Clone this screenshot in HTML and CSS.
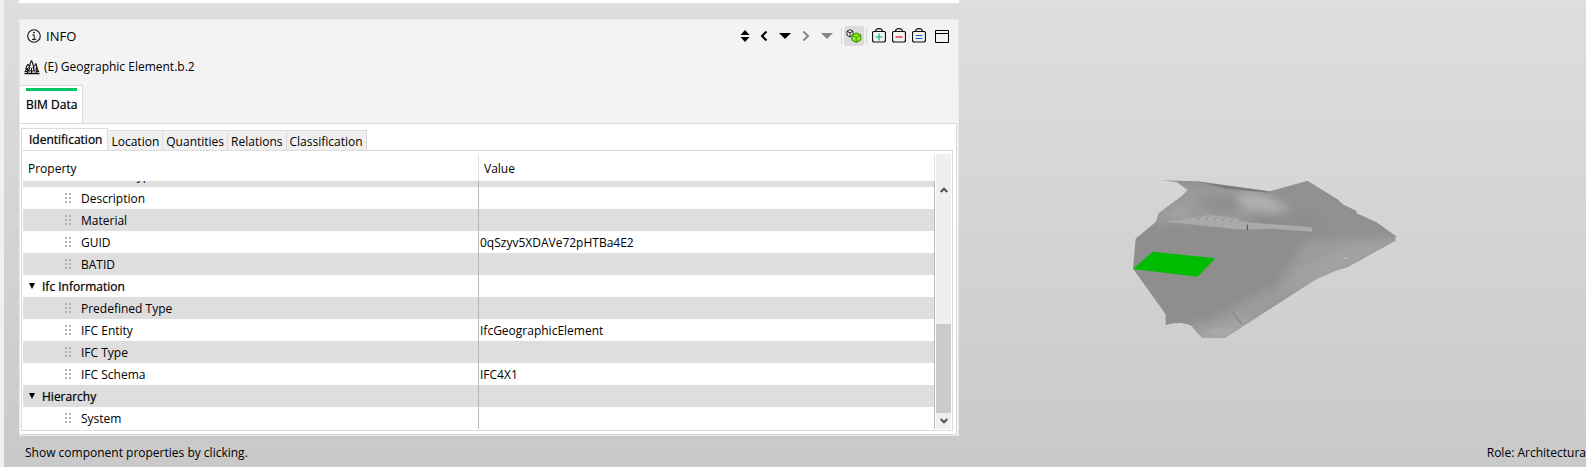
FILE: index.html
```html
<!DOCTYPE html>
<html lang="en">
<head>
<meta charset="utf-8">
<title>Info</title>
<link rel="stylesheet" href="styles.css">
</head>
<body>
<svg class="defs" aria-hidden="true">
  <defs>
    <symbol id="grip" viewBox="0 0 6 10"><path d="M0 0h2v2H0zM4 0h2v2H4zM0 4h2v2H0zM4 4h2v2H4zM0 8h2v2H0zM4 8h2v2H4z" fill="#b4b4b4"/></symbol>
    <symbol id="bag" viewBox="0 0 14 16"><path d="M3.500 3.500C3.500 2 5 .6 7 .6s3.500 1.400 3.500 2.900M2 3.500h10q1.500 0 1.500 1.500v7q0 2-2 2h-9q-2 0-2-2V5Q.5 3.500 2 3.500z" fill="none" stroke="#111" stroke-width="1.200"/></symbol>
  </defs>
</svg>
<div class="app">
  <main class="workspace">
    <div class="side">
      <section class="panel-above"></section>
      <section class="panel">
        <header class="panel-head">
          <svg class="icon-info" viewBox="0 0 14 14" aria-hidden="true"><circle cx="7" cy="7" r="6.300" fill="none" stroke="#111" stroke-width="1.100"/><path d="M6.200 3h1.600v1.300H6.200z"/><path d="M5.300 5.900h1.900v4.400M5 10.400h4.300" fill="none" stroke="#111"/></svg>
          <h1 class="panel-title">INFO</h1>
          <div class="toolbar">
            <button class="tool" aria-label="Sort"><svg width="10" height="12" viewBox="0 0 10 12"><path d="M5 0l4.500 5h-9zM5 12L.5 7h9z"/></svg></button>
            <button class="tool tool-narrow" aria-label="Back"><svg width="8" height="10" viewBox="0 0 8 10"><path d="M6.500.5L2 5l4.500 4.500" fill="none" stroke="#000" stroke-width="2"/></svg></button>
            <button class="tool tool-wide" aria-label="Back history"><svg width="12" height="6" viewBox="0 0 12 6"><path d="M0 0h12L6 6z"/></svg></button>
            <button class="tool tool-narrow" aria-label="Forward"><svg width="8" height="10" viewBox="0 0 8 10"><path d="M1.500.5L6 5 1.500 9.500" fill="none" stroke="#858585" stroke-width="2"/></svg></button>
            <button class="tool tool-wide" aria-label="Forward history"><svg width="12" height="6" viewBox="0 0 12 6"><path d="M0 0h12L6 6z" fill="#858585"/></svg></button>
            <span class="separator"></span>
            <button class="tool tool-on" aria-label="Show similar"><svg width="16" height="14" viewBox="0 0 16 14"><path d="M4 .7l3 1.600v4L4 8 1 6.300v-4zM1 2.300l3 1.600 3-1.600M4 3.900V8" fill="#fff" stroke="#222"/><path d="M10.300 4l4.400 2.200v4.600l-4.400 2.500-4.400-2.500V6.200z" fill="#8ef01c" stroke="#4c9a08" stroke-width="1.200"/><path d="M5.900 6.200l4.400 2.200 4.400-2.200M10.300 8.400v4.900" fill="none" stroke="#4c9a08"/></svg></button>
            <span class="separator"></span>
            <button class="tool" aria-label="Add to selection"><svg width="14" height="16" viewBox="0 0 14 16"><use href="#bag"/><path d="M7 5.500v7M3.500 9h7" stroke="#00b865" stroke-width="1.200"/></svg></button>
            <button class="tool" aria-label="Remove from selection"><svg width="14" height="16" viewBox="0 0 14 16"><use href="#bag"/><path d="M3.500 9h7" stroke="#e8101c" stroke-width="1.200"/></svg></button>
            <button class="tool" aria-label="Set selection"><svg width="14" height="16" viewBox="0 0 14 16"><use href="#bag"/><path d="M3.500 7.500h7M3.500 10.500h7" stroke="#1769c0" stroke-width="1.200"/></svg></button>
            <button class="tool tool-window" aria-label="Maximize"><svg width="14" height="14" viewBox="0 0 14 14"><path d="M.5 1.500h13v12H.5zM.5 4.500h13" fill="none" stroke="#000"/></svg></button>
          </div>
        </header>
        <div class="element">
          <svg class="icon-trees" viewBox="0 0 16 15" aria-hidden="true"><path d="M7.500.5L5.900 4.300M7.500.5l1.600 3.800M6.300 4L5 7.500h.8L4.500 11h6L9.200 7.500h.8L8.700 4M7.500 8v5.500M4 4.500Q2.300 6 2 8.500h.8L1.200 11.500h2.500M4 4.500l1 1M3.600 8v5.500M11.800 3.500L10.600 6M11.800 3.500l1.400 4.500h-.7l2 3.500h-2.800M12.200 8v5.500" fill="none" stroke="#111" stroke-width="1.100"/><path d="M.5 13.500h15" stroke="#111" stroke-width="1.500"/></svg>
          <span>(E) Geographic Element.b.2</span>
        </div>
        <nav class="main-tabs"><button class="main-tab">BIM Data</button></nav>
        <div class="content">
          <nav class="tabs">
            <button class="tab tab-on">Identification</button>
            <button class="tab">Location</button>
            <button class="tab">Quantities</button>
            <button class="tab">Relations</button>
            <button class="tab">Classification</button>
          </nav>
          <div class="sheet">
            <table class="props">
              <thead><tr><th class="col-name">Property</th><th>Value</th></tr></thead>
              <tbody>
                <tr class="partial"><td><div class="clip"><span>Element Type</span></div></td><td></td></tr>
                <tr><td class="item"><svg class="grip"><use href="#grip"/></svg>Description</td><td></td></tr>
                <tr><td class="item"><svg class="grip"><use href="#grip"/></svg>Material</td><td></td></tr>
                <tr><td class="item"><svg class="grip"><use href="#grip"/></svg>GUID</td><td>0qSzyv5XDAVe72pHTBa4E2</td></tr>
                <tr><td class="item"><svg class="grip"><use href="#grip"/></svg>BATID</td><td></td></tr>
                <tr><td class="group"><svg class="caret" viewBox="0 0 6 6"><path d="M0 0h6L3 6z"/></svg>Ifc Information</td><td></td></tr>
                <tr><td class="item"><svg class="grip"><use href="#grip"/></svg>Predefined Type</td><td></td></tr>
                <tr><td class="item"><svg class="grip"><use href="#grip"/></svg>IFC Entity</td><td>IfcGeographicElement</td></tr>
                <tr><td class="item"><svg class="grip"><use href="#grip"/></svg>IFC Type</td><td></td></tr>
                <tr><td class="item"><svg class="grip"><use href="#grip"/></svg>IFC Schema</td><td>IFC4X1</td></tr>
                <tr><td class="group"><svg class="caret" viewBox="0 0 6 6"><path d="M0 0h6L3 6z"/></svg>Hierarchy</td><td></td></tr>
                <tr><td class="item"><svg class="grip"><use href="#grip"/></svg>System</td><td></td></tr>
              </tbody>
            </table>
            <div class="scrollbar">
              <button class="scroll-btn scroll-up" aria-label="Scroll up"><svg width="8" height="6" viewBox="0 0 8 6"><path d="M.7 5L4 1.700 7.300 5" fill="none" stroke="#505050" stroke-width="2"/></svg></button>
              <div class="thumb"></div>
              <button class="scroll-btn" aria-label="Scroll down"><svg width="8" height="6" viewBox="0 0 8 6"><path d="M.7 1L4 4.300 7.300 1" fill="none" stroke="#505050" stroke-width="2"/></svg></button>
            </div>
          </div>
        </div>
      </section>
    </div>
    <section class="scene" aria-label="3D view">
      <svg width="325" height="200" viewBox="0 0 975 600">
        <defs>
          <clipPath id="outline"><path d="M153 61l110 3 215 30L592 63l90 55 15 15 42 20v7l60 27 61 43-6 4 4 7-145 80-33 10-60 25L345 533h-69l-31-35q-12-7-32-9-25-1-46 6v-32L69 326l8-90 61-51 8-25 67-50 21-20-34-24z"/></clipPath>
          <filter id="soft" x="-20%" y="-20%" width="140%" height="140%"><feGaussianBlur stdDeviation="12"/></filter>
        </defs>
        <g clip-path="url(#outline)">
          <path d="M0 0h975v600H0z" fill="#8e8e8e"/>
          <g filter="url(#soft)">
            <path d="M160 60l320 35 110 90-480 5 40-50 75-50z" fill="#9a9a9a"/>
            <path d="M480 95L600 50l280 180-250-10-80-60z" fill="#919191"/>
            <path d="M590 240l290-10-20 30-240 120-150 40 40-60z" fill="#9b9b9b"/>
            <path d="M600 310l130-60 130-10-20 30-230 110-100 10z" fill="#a2a2a2"/>
            <path d="M300 480l170-90 130-10-260 170h-80l-40-50z" fill="#9b9b9b"/>
            <path d="M270 520l160-50-70 70h-90z" fill="#a8a8a8"/>
            <path d="M270 110l100 0 60 35-90 10-80-20z" fill="#8e8e8e"/>
            <path d="M385 98l70 5 85 47-60 5-90-15z" fill="#b0b0b0"/>
            <path d="M400 168l150-5 130 10-80 20-160-5z" fill="#8c8c8c"/>
            <path d="M150 180l90-60-10 60z" fill="#a2a2a2"/>
          </g>
          <path d="M268 66l210 28v4l-130-12z" fill="#7c7c7c"/>
          <path d="M172 185l65-12 60-8 70 8 43 14 196 15v13l-116-9-78 3-30-1z" fill="#aaa"/>
          <path d="M203 184l8-7M233 182l10-10M261 182l10-12M286 181l9-11M310 181l11-10M335 183l10-10M360 185l9-7M385 187l9-6" stroke="#8d8d8d" stroke-width="3"/>
          <path d="M412 194v16" stroke="#444" stroke-width="3"/>
          <path d="M367 457l29 35" stroke="#8c8c8c" stroke-width="5"/>
          <path d="M285 514l80 3M310 507l65 3" stroke="#b1b1b1" stroke-width="2"/>
          <path d="M700 294l14 2" stroke="#c4c4c4" stroke-width="3"/>
        </g>
        <path d="M128 275l188 20-53 55-194-23z" fill="#00bc00"/>
      </svg>
    </section>
  </main>
  <footer class="status">
    <span>Show component properties by clicking.</span>
    <span>Role: Architectura</span>
  </footer>
</div>
</body>
</html>
```
FILE: styles.css
```css
* { box-sizing: border-box; }
body {
  margin: 0;
  font: 12px/16px "Open Sans", "Noto Sans", sans-serif;
  color: #000;
}
button {
  margin: 0;
  padding: 0;
  border: 0;
  background: none;
  font: inherit;
  color: inherit;
}
.defs { position: absolute; width: 0; height: 0; }
.app {
  min-height: 100vh;
  display: flex;
  flex-direction: column;
  border-left: 4px solid #f0f0f0;
  background: linear-gradient(#dedede, #c9c9c9);
  overflow: hidden;
}
.workspace {
  flex: 1;
  display: grid;
  grid-template-columns: 955fr 627fr;
}
.side { padding-left: 15px; }
.panel-above { height: 3px; margin-bottom: 16px; background: #fff; }
.panel { background: #f3f3f3; border: 1px solid #e9e9e9; }
.panel-head {
  display: flex;
  align-items: center;
  padding: 6px 6px 0 7px;
}
.icon-info { width: 14px; height: 14px; }
.panel-title { margin: 0 0 0 5px; font-size: 13px; font-weight: 400; }
.toolbar { display: flex; align-items: center; margin-left: auto; }
.tool {
  width: 20px;
  height: 20px;
  display: flex;
  align-items: center;
  justify-content: center;
}
.tool-narrow { width: 18px; }
.tool-wide { width: 24px; }
.tool-on { background: #dcdcdc; border-radius: 3px; }
.tool-window { margin-left: 3px; }
.separator { width: 1px; height: 16px; margin: 0 2px; background: #d8d8d8; }
.element {
  display: flex;
  align-items: center;
  gap: 4px;
  padding: 13px 4px 10px;
}
.icon-trees { width: 16px; height: 15px; }
.main-tabs { display: flex; }
.main-tab {
  height: 38px;
  padding: 2px 5px 0 6px;
  border: 1px solid #d8d8d8;
  border-width: 1px 1px 0 0;
  background: #fff;
  display: flex;
  flex-direction: column;
  gap: 6px;
}
.main-tab, .tab-on, .group { text-shadow: 0 0 1px rgba(0, 0, 0, .5); }
.main-tab::before { content: ""; width: 100%; height: 3px; background: #00c566; }
.content {
  margin-right: 1px;
  padding: 4px 3px 3px 1px;
  background: #fff;
  border: 1px solid #dcdcdc;
  border-left: 0;
}
.tabs { display: flex; align-items: flex-end; }
.tab {
  height: 20px;
  padding: 2px 3px 0;
  border: 1px solid #dcdcdc;
  border-width: 1px 1px 0 0;
  background: #f0f0f0;
}
.tab-on {
  height: 22px;
  padding: 0 5px 0 7px;
  border-left-width: 1px;
  background: #fff;
}
.sheet {
  display: flex;
  gap: 1px;
  padding: 3px 0 1px 1px;
  border: 1px solid #dcdcdc;
}
.props { flex: 1; table-layout: fixed; border-collapse: separate; border-spacing: 0; }
.props th {
  height: 27px;
  padding: 2px 5px 0;
  border-right: 1px solid #e4e4e4;
  text-align: left;
  font-weight: 400;
}
.col-name { width: 50%; }
.props td { height: 22px; padding: 1px 1px 0; border-right: 1px solid #b8b8b8; }
.props tbody tr:nth-child(odd) { background: #dedede; }
.props .partial td { height: 6px; padding: 0; }
.clip { height: 6px; padding: 0 0 3px 58px; overflow: hidden; display: flex; align-items: flex-end; }
.props .item { padding-left: 42px; }
.grip { width: 6px; height: 10px; margin-right: 10px; }
.props .group { padding-left: 6px; }
.caret { width: 6px; height: 6px; margin: 0 7px 2px 0; }
.scrollbar {
  width: 15px;
  margin-right: 1px;
  display: flex;
  flex-direction: column;
  align-items: center;
  background: #efefef;
}
.scroll-btn { width: 100%; height: 16px; display: flex; align-items: center; justify-content: center; }
.scroll-up { margin-top: 28px; }
.thumb { width: 100%; height: 89px; margin-top: auto; background: #cbcbcb; }
.scene { display: flex; justify-content: center; padding-top: 160px; }
.status {
  display: flex;
  justify-content: space-between;
  padding: 9px 0 6px 21px;
  white-space: nowrap;
}
```
